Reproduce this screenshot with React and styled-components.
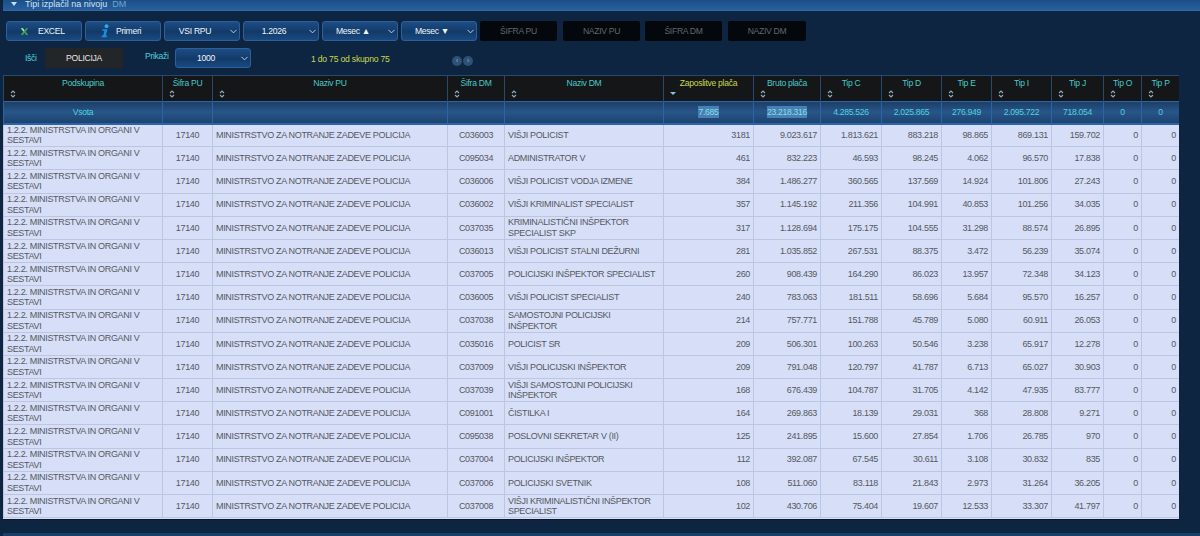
import React from "react";
import styled, { createGlobalStyle } from "styled-components";
import { ChevronDown } from "lucide-react";

const GlobalStyle = createGlobalStyle`
  html, body {
    margin: 0;
    height: 536px;
    overflow: hidden;
    background: #0e2640;
    font-family: "Liberation Sans", Arial, sans-serif;
  }
`;

const Page = styled.div`
  width: 1200px;
  height: 536px;
  display: flex;
  flex-direction: column;
  overflow: hidden;
  background: #0d2540;
`;

const TitleBar = styled.div`
  height: 10px;
  flex: none;
  margin-left: 3px;
  padding-left: 8px;
  display: flex;
  align-items: flex-end;
  gap: 5px;
  overflow: hidden;
  background: linear-gradient(#1d4f86, #275f9d);
  border-bottom: 1px solid #2f6aa8;
  color: #cfe3f5;
  font-size: 9px;
  line-height: 11px;
  white-space: nowrap;
`;

const TitleDot = styled.span`
  width: 0;
  height: 0;
  margin-right: 3px;
  margin-bottom: 4px;
  border-left: 3px solid transparent;
  border-right: 3px solid transparent;
  border-top: 4px solid #bfe0ff;
`;

const TitleHint = styled.span`
  color: #6fa3d4;
`;

const Toolbar = styled.div`
  display: flex;
  gap: 3px;
  margin: 10px 0 0 6px;
  height: 20px;
`;

const Button = styled.div`
  width: 76px;
  height: 20px;
  box-sizing: border-box;
  flex: none;
  display: flex;
  align-items: center;
  justify-content: ${(p) => (p.$pl ? "flex-start" : "center")};
  gap: ${(p) => p.$gap || 0}px;
  position: relative;
  margin-left: ${(p) => p.$ml || 0}px;
  padding-left: ${(p) => p.$pl || 0}px;
  padding-right: ${(p) => (p.$select ? 14 : 0)}px;
  border: 1px solid #2c5f9c;
  border-radius: 3px;
  background: linear-gradient(#1d4d84, #123a69 55%, #1a4a80);
  color: #eef5fc;
  font-size: 8.6px;
  letter-spacing: -0.3px;
`;

const Chevron = styled(ChevronDown)`
  position: absolute;
  right: 0;
  top: 4px;
  width: 11px;
  height: 11px;
  color: #c6dcf2;
`;

const DarkField = styled.div`
  width: ${(p) => p.$w}px;
  height: 20px;
  flex: none;
  margin-left: ${(p) => p.$ml || 0}px;
  display: flex;
  align-items: center;
  justify-content: center;
  border-radius: 2px;
  background: #04070c;
  color: #62676b;
  font-size: 8.6px;
  letter-spacing: -0.3px;
`;

const FilterRow = styled.div`
  display: flex;
  align-items: flex-start;
  height: 27px;
  margin: 7px 0 0;
`;

const Label = styled.span`
  width: ${(p) => p.$w}px;
  flex: none;
  margin: ${(p) => p.$m};
  color: #4fd0da;
  font-size: 8.6px;
  letter-spacing: -0.3px;
  line-height: 11px;
  white-space: nowrap;
`;

const SearchBox = styled.div`
  width: 78px;
  height: 20px;
  margin-left: 8px;
  display: flex;
  align-items: center;
  justify-content: center;
  background: #232628;
  color: #e8e8e8;
  font-size: 8.6px;
  letter-spacing: -0.3px;
`;

const PageInfo = styled.span`
  margin: 5px 0 0 60px;
  width: 141px;
  color: #c9d94c;
  font-size: 8.6px;
  letter-spacing: -0.2px;
  line-height: 12px;
  white-space: nowrap;
`;

const NavButtons = styled.div`
  display: flex;
  gap: 1px;
  margin-top: 8px;
`;

const NavDot = styled.span`
  width: 10px;
  height: 10px;
  border-radius: 50%;
  background: #2f5175;
  color: #8fa8c0;
  font-size: 8px;
  line-height: 9px;
  text-align: center;
`;

const TableWrap = styled.div`
  width: 1176px;
  margin-left: 3px;
  height: 444px;
  overflow: hidden;
  background: #d7dff8;
  box-shadow: 0 1px 0 #071728;
`;

const Table = styled.table`
  width: 1176px;
  table-layout: fixed;
  border-collapse: collapse;
  font-size: 9px;
  letter-spacing: -0.33px;
`;

const HeadCell = styled.th`
  height: 26px;
  box-sizing: border-box;
  padding: 2px 2px 0;
  vertical-align: top;
  font-weight: 400;
  font-size: 8.6px;
  letter-spacing: -0.3px;
  line-height: 11px;
  background: #141618;
  border: 1px solid #27496f;
  border-bottom: none;
  color: ${(p) => (p.$sorted ? "#c9d94c" : "#47c9c9")};
`;

const SortIcon = styled.svg`
  display: block;
  margin: 1px 0 0 4px;
`;

const SumCell = styled.td`
  height: 22px;
  box-sizing: border-box;
  padding: 0 2px;
  text-align: center;
  font-size: 8.6px;
  letter-spacing: -0.3px;
  color: #4fd3dc;
  background: linear-gradient(#1c3f68, #285689 45%, #1b426e);
  border: 1px solid #2c64a6;
  border-width: 1px 1px 2px;
`;

const Selected = styled.span`
  padding: 1px 0;
  background: #4a7fb5;
  color: #7fe0e6;
`;

const Cell = styled.td`
  height: 23.2px;
  box-sizing: border-box;
  padding: 0 3px;
  color: #55585f;
  line-height: 10.5px;
  text-align: ${(p) => p.$align || "left"};
  background: #d7dff8;
  border: 1px solid #bcc6e0;
  overflow: hidden;
`;

const FooterBar = styled.div`
  height: 3px;
  margin: 14px 0 0 3px;
  background: #173f6b;
`;

const COLS = [159, 50, 235, 57, 159, 90, 67, 61, 60, 50, 60, 52, 38, 38];
const HEADS = [
  "Podskupina", "Šifra PU", "Naziv PU", "Šifra DM", "Naziv DM", "Zaposlitve plača", "Bruto plača",
  "Tip C", "Tip D", "Tip E", "Tip I", "Tip J", "Tip O", "Tip P",
];
const SUMS = ["4.285.526", "2.025.865", "276.949", "2.095.722", "718.054", "0", "0"];

const ROWS = [
  ["C036003", "VIŠJI POLICIST", "3181", "9.023.617", "1.813.621", "883.218", "98.865", "869.131", "159.702"],
  ["C095034", "ADMINISTRATOR V", "461", "832.223", "46.593", "98.245", "4.062", "96.570", "17.838"],
  ["C036006", "VIŠJI POLICIST VODJA IZMENE", "384", "1.486.277", "360.565", "137.569", "14.924", "101.806", "27.243"],
  ["C036002", "VIŠJI KRIMINALIST SPECIALIST", "357", "1.145.192", "211.356", "104.991", "40.853", "101.256", "34.035"],
  ["C037035", "KRIMINALISTIČNI INŠPEKTOR SPECIALIST SKP", "317", "1.128.694", "175.175", "104.555", "31.298", "88.574", "26.895"],
  ["C036013", "VIŠJI POLICIST STALNI DEŽURNI", "281", "1.035.852", "267.531", "88.375", "3.472", "56.239", "35.074"],
  ["C037005", "POLICIJSKI INŠPEKTOR SPECIALIST", "260", "908.439", "164.290", "86.023", "13.957", "72.348", "34.123"],
  ["C036005", "VIŠJI POLICIST SPECIALIST", "240", "783.063", "181.511", "58.696", "5.684", "95.570", "16.257"],
  ["C037038", "SAMOSTOJNI POLICIJSKI INŠPEKTOR", "214", "757.771", "151.788", "45.789", "5.080", "60.911", "26.053"],
  ["C035016", "POLICIST SR", "209", "506.301", "100.263", "50.546", "3.238", "65.917", "12.278"],
  ["C037009", "VIŠJI POLICIJSKI INŠPEKTOR", "209", "791.048", "120.797", "41.787", "6.713", "65.027", "30.903"],
  ["C037039", "VIŠJI SAMOSTOJNI POLICIJSKI INŠPEKTOR", "168", "676.439", "104.787", "31.705", "4.142", "47.935", "83.777"],
  ["C091001", "ČISTILKA I", "164", "269.863", "18.139", "29.031", "368", "28.808", "9.271"],
  ["C095038", "POSLOVNI SEKRETAR V (II)", "125", "241.895", "15.600", "27.854", "1.706", "26.785", "970"],
  ["C037004", "POLICIJSKI INŠPEKTOR", "112", "392.087", "67.545", "30.611", "3.108", "30.832", "835"],
  ["C037006", "POLICIJSKI SVETNIK", "108", "511.060", "83.118", "21.843", "2.973", "31.264", "36.205"],
  ["C037008", "VIŠJI KRIMINALISTIČNI INŠPEKTOR SPECIALIST", "102", "430.706", "75.404", "19.607", "12.533", "33.307", "41.797"],
];

function ExcelIcon() {
  return (
    <svg width="9" height="9" viewBox="0 0 12 11">
      <path d="M1 1h3l2 3 2-3h3L7.6 5.5 11 10H8L6 7 4 10H1l3.4-4.5z" fill="#3fa34d" />
      <path d="M1 1h3l2 3-1.4 1.6z" fill="#a6e3aa" />
    </svg>
  );
}

function InfoIcon() {
  return (
    <svg width="10" height="14" viewBox="0 0 10 14">
      <circle cx="6.5" cy="2.2" r="1.9" fill="#35a9ee" />
      <path d="M2.5 5.2h5L5.8 11.6h1.4l-.5 1.6H1.5l.5-1.6h1.3L4.4 6.8H2.1z" fill="#1d8fdc" />
    </svg>
  );
}

function Sort({ active }) {
  if (active) {
    return (
      <SortIcon width="6" height="7" viewBox="0 0 6 7">
        <path d="M0 2h6L3 5z" fill="#7fc4ea" />
      </SortIcon>
    );
  }
  return (
    <SortIcon width="6" height="8" viewBox="0 0 6 8" fill="none" stroke="#8fa9bb" strokeWidth="1.1">
      <path d="M1 3l2-2 2 2M1 5l2 2 2-2" />
    </SortIcon>
  );
}

export default function App() {
  return (
    <Page>
      <GlobalStyle />
      <TitleBar>
        <TitleDot />
        <span>Tipi izplačil na nivoju</span>
        <TitleHint>DM</TitleHint>
      </TitleBar>

      <Toolbar>
        <Button $pl={13} $gap={9}><ExcelIcon />EXCEL</Button>
        <Button $pl={14} $gap={6}><InfoIcon />Primeri</Button>
        <Button $select>VSI RPU<Chevron /></Button>
        <Button $select>1.2026<Chevron /></Button>
        <Button $select>Mesec ▲<Chevron /></Button>
        <Button $select>Mesec ▼<Chevron /></Button>
        <DarkField $w={77}>ŠIFRA PU</DarkField>
        <DarkField $w={77} $ml={3}>NAZIV PU</DarkField>
        <DarkField $w={77} $ml={2}>ŠIFRA DM</DarkField>
        <DarkField $w={78} $ml={3}>NAZIV DM</DarkField>
      </Toolbar>

      <FilterRow>
        <Label $w={12} $m="5px 0 0 25px">Išči</Label>
        <SearchBox>POLICIJA</SearchBox>
        <Label $w={25} $m="3px 0 0 22px">Prikaži</Label>
        <Button $select $ml={5}>1000<Chevron /></Button>
        <PageInfo>1 do 75 od skupno 75</PageInfo>
        <NavButtons>
          <NavDot>‹</NavDot>
          <NavDot>›</NavDot>
        </NavButtons>
      </FilterRow>

      <TableWrap>
        <Table>
          <colgroup>
            {COLS.map((w, i) => <col key={i} width={w} />)}
          </colgroup>
          <thead>
            <tr>
              {HEADS.map((h, i) => (
                <HeadCell key={h} $sorted={i === 5}>
                  {h}
                  <Sort active={i === 5} />
                </HeadCell>
              ))}
            </tr>
            <tr>
              <SumCell>Vsota</SumCell>
              <SumCell />
              <SumCell />
              <SumCell />
              <SumCell />
              <SumCell><Selected>7.685</Selected></SumCell>
              <SumCell><Selected>23.218.316</Selected></SumCell>
              {SUMS.map((s, i) => <SumCell key={i}>{s}</SumCell>)}
            </tr>
          </thead>
          <tbody>
            {ROWS.map((r) => (
              <tr key={r[0]}>
                <Cell>1.2.2. MINISTRSTVA IN ORGANI V SESTAVI</Cell>
                <Cell $align="center">17140</Cell>
                <Cell>MINISTRSTVO ZA NOTRANJE ZADEVE POLICIJA</Cell>
                <Cell $align="center">{r[0]}</Cell>
                <Cell>{r[1]}</Cell>
                {r.slice(2).map((v, i) => <Cell key={i} $align="right">{v}</Cell>)}
                <Cell $align="right">0</Cell>
                <Cell $align="right">0</Cell>
              </tr>
            ))}
          </tbody>
        </Table>
      </TableWrap>
      <FooterBar />
    </Page>
  );
}
